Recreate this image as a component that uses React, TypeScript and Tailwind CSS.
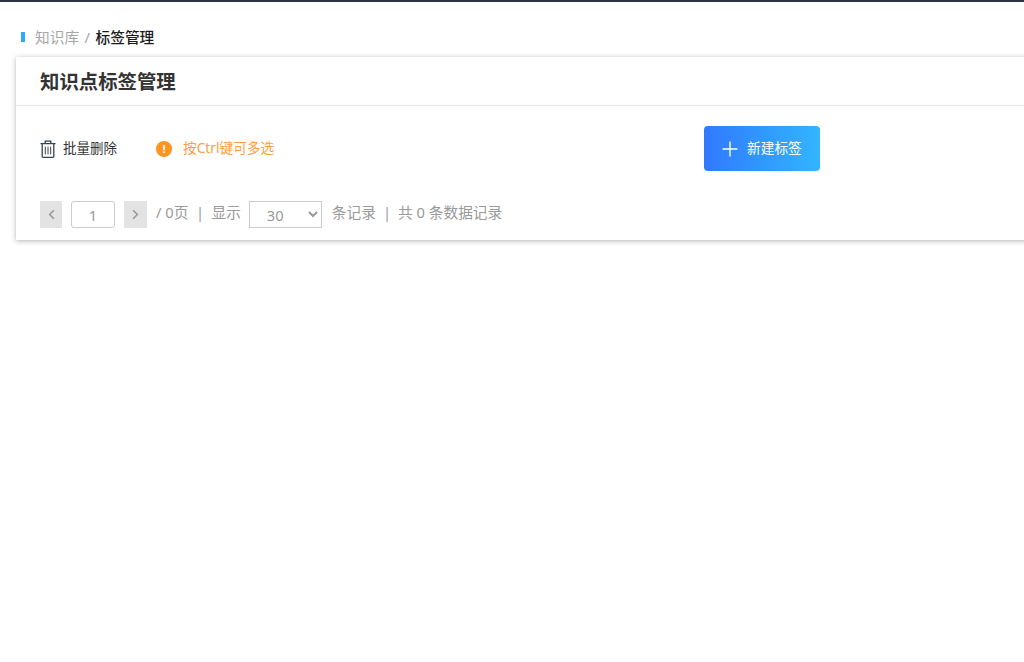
import { Plus, ChevronLeft, ChevronRight } from "lucide-react";

const font = "font-['Noto_Sans','Noto_Sans_CJK_SC',sans-serif]";

function TrashIcon() {
  return (
    <svg width="16" height="18" viewBox="0 0 16 18" fill="none" stroke="#3a424d" strokeWidth="1.3">
      <path d="M0.5 3.6H15.5" />
      <path d="M5.2 3.4V1.2H10.8V3.4" />
      <path d="M2.2 3.6V16.2C2.2 16.9 2.7 17.3 3.3 17.3H12.7C13.3 17.3 13.8 16.9 13.8 16.2V3.6" />
      <path d="M5.3 6.6V14.4M8 6.6V14.4M10.7 6.6V14.4" strokeWidth="1" />
    </svg>
  );
}

export default function App() {
  return (
    <div className={`${font} h-[662px] w-[1024px] overflow-hidden bg-white`}>
      <div className="h-[2px] bg-[#2b3440]" />
      {/* breadcrumb */}
      <div className="flex h-[55px] items-center pl-[21px] pt-[14px] text-[14.7px] leading-[20px]">
        <span className="mr-[10px] h-[10px] w-[4px] bg-[#2ea7ff]" />
        <span className="text-[#a6a6a6]">知识库</span>
        <span className="mx-[5.5px] text-[#a6a6a6]">/</span>
        <span className="font-medium text-[#1a1a1a]">标签管理</span>
      </div>

      <div className="ml-[16px] h-[183px] w-[1100px] bg-white shadow-[0_1px_5px_rgba(0,0,0,0.3)]">
        <div className="flex h-[49px] items-center border-b border-[#e6e6e6] pl-[24px] pt-[1px]">
          <h1 className="text-[19.4px] font-bold leading-[24px] text-[#333333]">知识点标签管理</h1>
        </div>

        {/* toolbar */}
        <div className="flex h-[95px] items-start pl-[24px] pt-[20px]">
          <div className="flex h-[45px] items-center">
            <TrashIcon />
            <span className="ml-[7px] w-[93px] text-[13.5px] text-[#333333]">批量删除</span>
            <span className="flex h-[16px] w-[16px] items-center justify-center rounded-full bg-[#ff9420] text-[11px] font-bold leading-none text-white">!</span>
            <span className="ml-[11px] w-[521px] text-[13.7px] text-[#ff9d45]">按Ctrl键可多选</span>
          </div>
          <button className="flex h-[45px] w-[116px] items-center rounded-[4px] bg-gradient-to-r from-[#3278ff] to-[#33b5ff] pl-[14px] text-[13.7px] text-white">
            <Plus size={24} strokeWidth={1.4} />
            <span className="ml-[5px]">新建标签</span>
          </button>
        </div>

        {/* pagination */}
        <div className="flex h-[27px] items-center pl-[24px] text-[14.7px] text-[#999999]">
          <button className="flex h-[27px] w-[22px] items-center justify-center bg-[#e3e3e3] text-[#999999]">
            <ChevronLeft size={15} strokeWidth={2.8} />
          </button>
          <input
            readOnly
            value="1"
            className="ml-[9px] h-[27px] w-[44px] rounded-[3px] border border-[#cccccc] text-center text-[14.7px] text-[#999999] outline-none"
          />
          <button className="ml-[9px] flex h-[27px] w-[23px] items-center justify-center bg-[#e3e3e3] text-[#999999]">
            <ChevronRight size={15} strokeWidth={2.8} />
          </button>
          <span className="mb-[4px] ml-[9px]">/ 0页</span>
          <span className="mx-[7.5px] mb-[4px]">|</span>
          <span className="mb-[4px]">显示</span>
          <select
            defaultValue="30"
            className="ml-[8px] h-[27px] w-[73px] border border-[#cccccc] bg-white pl-[13px] text-[14.7px] text-[#999999] outline-none"
          >
            <option value="30">30</option>
            <option value="50">50</option>
            <option value="100">100</option>
          </select>
          <span className="mb-[4px] ml-[10px]">条记录</span>
          <span className="mx-[7px] mb-[4px]">|</span>
          <span className="mb-[4px]">共 0 条数据记录</span>
        </div>
      </div>
    </div>
  );
}
